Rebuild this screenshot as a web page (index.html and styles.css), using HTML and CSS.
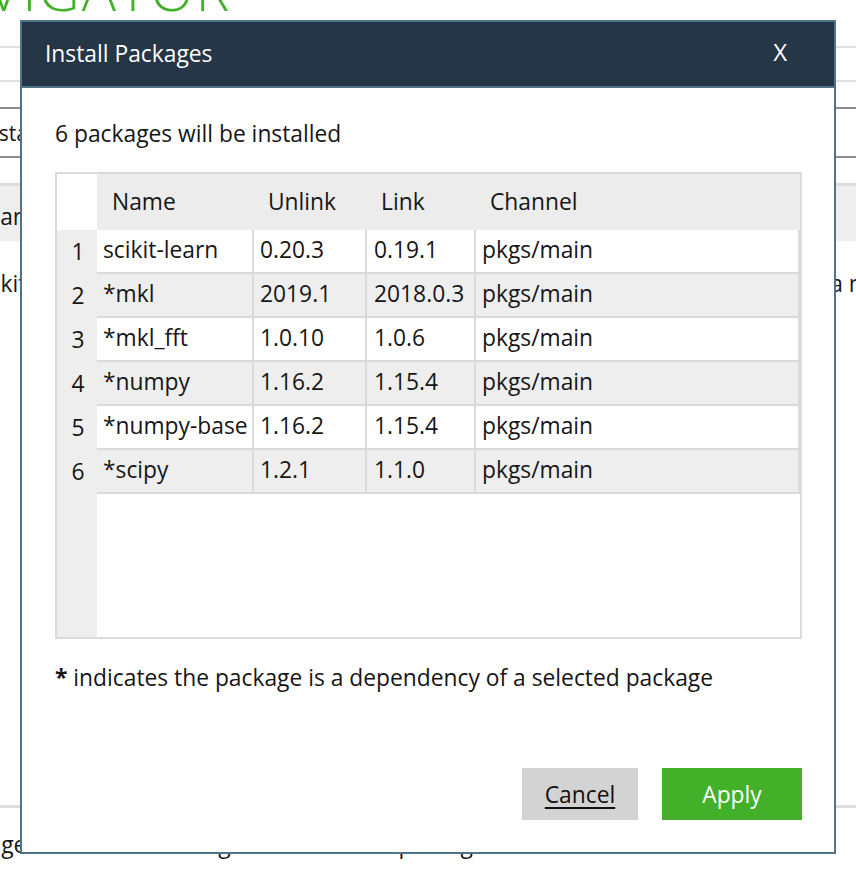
FILE: index.html
```html
<!DOCTYPE html>
<html>
<head>
<meta charset="utf-8">
<title>Install Packages</title>
<link rel="stylesheet" href="styles.css">
</head>
<body>
<div class="app">
  <div class="brand"><span class="brand-text">NAVIGATOR</span></div>
  <div class="toolbar"></div>
  <div class="gap-dark"></div>
  <div class="filter"><span class="cut-install">Installed</span></div>
  <div class="gap"></div>
  <div class="list-head"><span class="cut-name">Name</span></div>
  <div class="list-row"><span class="cut-pkg">scikit-learn</span><span class="desc">a numerical library</span></div>
  <div class="fill"></div>
  <div class="status"><span class="cut-status">package available matching 'scikit-learn'&nbsp;&nbsp;&nbsp;1 package selected</span></div>
</div>

<div class="dialog">
  <div class="dlg-head">
    <span class="dlg-title">Install Packages</span>
    <span class="dlg-close">X</span>
  </div>
  <div class="dlg-body">
    <p class="summary">6 packages will be installed</p>
    <div class="table">
      <div class="rownums">
        <div class="corner"></div>
        <div class="num">1</div>
        <div class="num">2</div>
        <div class="num">3</div>
        <div class="num">4</div>
        <div class="num">5</div>
        <div class="num">6</div>
      </div>
      <div class="grid">
        <div class="thead">
          <div class="th th-name">Name</div>
          <div class="th">Unlink</div>
          <div class="th">Link</div>
          <div class="th">Channel</div>
        </div>
        <div class="tr"><div class="td">scikit-learn</div><div class="td">0.20.3</div><div class="td td-link">0.19.1</div><div class="td">pkgs/main</div></div>
        <div class="tr alt"><div class="td">*mkl</div><div class="td">2019.1</div><div class="td td-link">2018.0.3</div><div class="td">pkgs/main</div></div>
        <div class="tr"><div class="td">*mkl_fft</div><div class="td">1.0.10</div><div class="td td-link">1.0.6</div><div class="td">pkgs/main</div></div>
        <div class="tr alt"><div class="td">*numpy</div><div class="td">1.16.2</div><div class="td td-link">1.15.4</div><div class="td">pkgs/main</div></div>
        <div class="tr"><div class="td">*numpy-base</div><div class="td">1.16.2</div><div class="td td-link">1.15.4</div><div class="td">pkgs/main</div></div>
        <div class="tr alt"><div class="td">*scipy</div><div class="td">1.2.1</div><div class="td td-link">1.1.0</div><div class="td">pkgs/main</div></div>
      </div>
    </div>
    <p class="note"><b>*</b> indicates the package is a dependency of a selected package</p>
    <div class="actions">
      <button class="btn btn-cancel">Cancel</button>
      <button class="btn btn-apply">Apply</button>
    </div>
  </div>
</div>
</body>
</html>
```
FILE: styles.css
```css
* { box-sizing: border-box; }
html, body {
  margin: 0;
  padding: 0;
  background: #ffffff;
}
body {
  width: 856px;
  height: 874px;
  overflow: hidden;
  position: relative;
  font-family: "Open Sans", "Noto Sans", sans-serif;
  font-size: 22.8px;
  color: #161616;
}

/* background application */
.app {
  width: 856px;
  height: 874px;
  display: flex;
  flex-direction: column;
  overflow: hidden;
}
.brand {
  height: 48px;
  border-bottom: 2px solid #e1e1e1;
  overflow: hidden;
  white-space: nowrap;
}
.brand-text {
  display: block;
  margin-top: -41px;
  margin-left: -92px;
  font-size: 57px;
  line-height: 60px;
  font-weight: 300;
  letter-spacing: 2px;
  color: #43b02a;
}
.toolbar {
  height: 34px;
  border-bottom: 2px solid #e1e1e1;
}
.gap-dark {
  height: 27px;
  border-bottom: 2px solid #8c8c8c;
}
.filter {
  height: 49px;
  border-bottom: 2px solid #8c8c8c;
  display: flex;
  align-items: center;
  white-space: nowrap;
}
.cut-install { margin-left: -20px; font-size: 21px; }
.gap { height: 25px; }
.list-head {
  height: 58px;
  border-top: 3px solid #dcdcdc;
  background: #eeeeee;
  display: flex;
  align-items: center;
  padding-top: 6px;
  white-space: nowrap;
}
.cut-name { margin-left: -17px; }
.list-row {
  height: 84px;
  display: flex;
  align-items: center;
  white-space: nowrap;
}
.cut-pkg { margin-left: -27px; }
.desc { margin-left: 742px; }
.fill { flex: 1; }
.status {
  height: 69px;
  border-top: 3px solid #dddddd;
  padding-top: 22px;
  white-space: nowrap;
  line-height: 30px;
}
.cut-status { margin-left: -61px; }

/* dialog overlay */
.dialog {
  position: absolute;
  left: 20px;
  top: 20px;
  width: 816px;
  height: 834px;
  border: 2px solid #50738a;
  background: #ffffff;
  display: flex;
  flex-direction: column;
}
.dlg-head {
  height: 66px;
  flex: none;
  background: #253647;
  border-bottom: 2px solid #50738a;
  display: flex;
  align-items: center;
  justify-content: space-between;
  padding: 0 47px 0 23px;
  color: #ffffff;
}
.dlg-title {
  font-size: 22.8px;
  line-height: 30px;
}
.dlg-close {
  font-size: 24px;
  line-height: 30px;
  margin-top: -4px;
}
.dlg-body {
  flex: 1;
  padding: 0 32px 0 33px;
  display: flex;
  flex-direction: column;
}
.summary {
  margin: 31px 0 0 0;
  line-height: 30px;
}
.table {
  margin-top: 23px;
  width: 747px;
  height: 467px;
  border: 2px solid #dadada;
  display: flex;
}
.rownums {
  width: 40px;
  flex: none;
  background: #eeeeee;
  display: flex;
  flex-direction: column;
}
.corner {
  height: 56px;
  background: #ffffff;
}
.num {
  height: 44px;
  text-align: center;
  line-height: 44px;
  padding-left: 2px;
}
.grid {
  flex: 1;
  display: flex;
  flex-direction: column;
}
.thead {
  height: 56px;
  background: #ececec;
  display: grid;
  grid-template-columns: 157px 113px 109px 324px;
  align-items: center;
}
.th {
  padding-left: 14px;
  line-height: 30px;
}
.th-name { padding-left: 15px; }
.tr {
  height: 44px;
  display: grid;
  grid-template-columns: 157px 113px 109px 324px;
  background: #ffffff;
}
.tr.alt { background: #eeeeee; }
.td {
  border-right: 2px solid #dadada;
  border-bottom: 2px solid #dadada;
  padding-left: 6px;
  line-height: 40px;
  white-space: nowrap;
  overflow: hidden;
}
.td-link { padding-left: 7px; }
.note {
  margin: 24px 0 0 0;
  line-height: 30px;
}
.note b { font-weight: 700; }
.actions {
  margin-top: 75px;
  display: flex;
  justify-content: flex-end;
  gap: 24px;
}
.btn {
  height: 52px;
  border: none;
  font-family: "Open Sans", "Noto Sans", sans-serif;
  font-size: 22.8px;
  padding: 0;
  cursor: pointer;
}
.btn-cancel {
  width: 116px;
  background: #d3d3d3;
  color: #111111;
  text-decoration: underline;
  text-underline-offset: 4px;
}
.btn-apply {
  width: 140px;
  background: #43b02a;
  color: #ffffff;
}
```
